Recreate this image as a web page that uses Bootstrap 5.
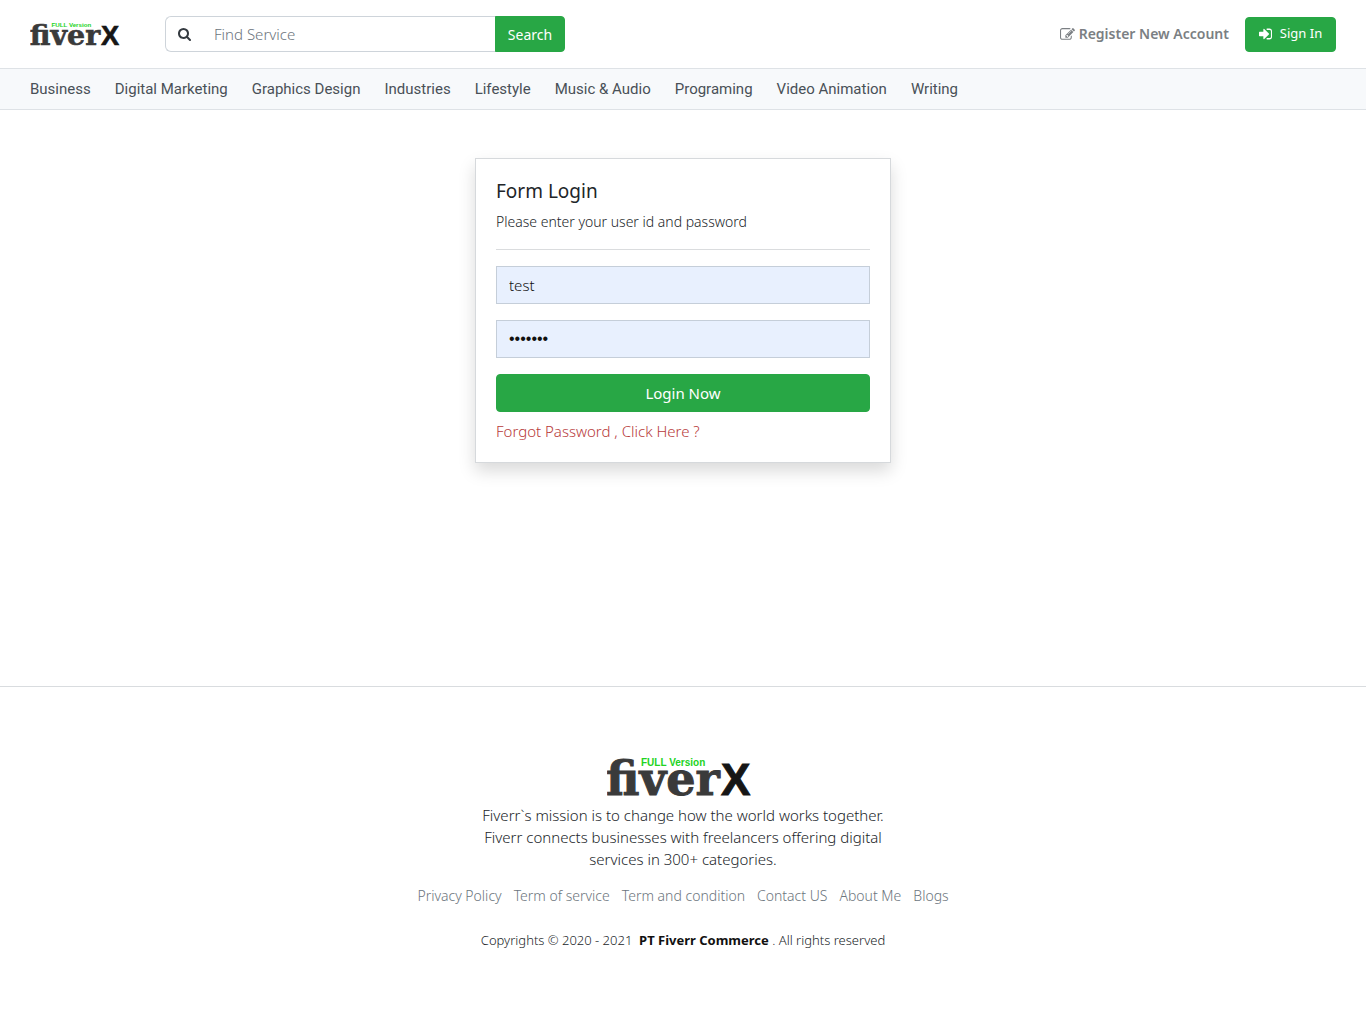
<!DOCTYPE html>
<html lang="en">
<head>
<meta charset="utf-8">
<meta name="viewport" content="width=device-width, initial-scale=1">
<title>fiverX - Form Login</title>
<link href="https://cdn.jsdelivr.net/npm/bootstrap@5.3.0/dist/css/bootstrap.min.css" rel="stylesheet">
<style>
body{font-family:"Noto Sans","Open Sans",sans-serif;font-size:14px;line-height:22px;font-weight:300;color:#212529;background:#fff}
a{text-decoration:none}
.site-top{padding:16px 30px;gap:45px;border-bottom:1px solid #dee2e6}
.brand-sm svg{width:90px;height:26px;display:block}
.find-box{width:400px;height:36px}
.find-box .input-group-text{background:#fff;border-color:#ced4da;border-right:0;padding:0 12px;color:#343a40;width:38px}
.find-box .form-control{border-color:#ced4da;border-left:0;font-size:15px;font-weight:300;padding:0 12px}
.find-box .form-control::placeholder{color:#6c757d}
.btn-green{--bs-btn-bg:#28a745;--bs-btn-border-color:#28a745;--bs-btn-color:#fff;--bs-btn-hover-bg:#218838;--bs-btn-hover-color:#fff;--bs-btn-border-radius:4px;font-weight:400}
.find-box .btn,.btn-signin{font-size:14px;padding:0 8px}
.find-box .btn{width:70px}
.btn-signin{width:91px;height:35px;font-size:13px}
.register-link{color:#7b7f83;font-weight:600;font-size:14px}
.cat-bar{height:41px;padding:0 30px;gap:24px;background:#f7f9fb;border-bottom:1px solid #dee2e6;font:400 15px/22px Roboto,sans-serif}
.cat-bar a{color:#495057}
.page-main{min-height:576px;padding-top:48px}
.login-card{max-width:416px;padding:20px;background:#fff;border:1px solid #d6d9dc;box-shadow:0 8px 16px rgba(0,0,0,.15)}
.login-card h1{font-size:19px;line-height:24px;font-weight:400;margin-bottom:8px}
.login-card hr{margin:0 0 16px;border-top:1px solid #dadcde;opacity:1}
.login-card .form-control{height:38px;border-radius:0;background:#e8f0fe;border-color:#c5ced9;font-size:15px;font-weight:300;margin-bottom:16px;color:#111}
.login-card .form-control[type=password]{font-family:"Liberation Sans",sans-serif;font-weight:400;font-size:16px}
.login-card .btn{height:38px;font-size:15px;padding:0}
.forgot{color:#b73a3a;font-size:15px}
.site-foot{border-top:1px solid #d9dcdf;padding:70px 16px 59px}
.brand-lg{padding-right:8px}
.brand-lg svg{width:144px;height:42px}
.mission{max-width:408px;font-size:15px;margin:5px auto 15px}
.foot-links{gap:12px;font-size:14px;margin-bottom:22px}
.foot-links a{color:#6c757d}
.copyright{font-size:13px}
.copyright b{font-weight:700;color:#111}
</style>
</head>
<body>
<svg class="d-none" aria-hidden="true">
  <symbol id="logo" viewBox="0 0 144 42">
    <text x="-1" y="38" font-family="DejaVu Serif,serif" font-weight="700" font-size="46" fill="#3a3a3a" stroke="#3a3a3a" stroke-width="1">fiver</text>
    <text x="114" y="38" font-family="Liberation Sans,sans-serif" font-weight="700" font-size="44" fill="#161616" stroke="#161616" stroke-width="1">X</text>
    <text x="34" y="9" font-family="Liberation Sans,sans-serif" font-weight="700" font-size="10" fill="#22d322">FULL Version</text>
  </symbol>
</svg>
<header>
  <div class="site-top d-flex align-items-center">
    <a class="brand-sm" href="#" aria-label="fiverX"><svg><use href="#logo"/></svg></a>
    <form class="find-box input-group flex-nowrap">
      <label class="input-group-text" for="find"><svg width="15" height="15" viewBox="0 0 1664 1664" fill="currentColor" aria-hidden="true"><path d="M1152 704q0-185-131.500-316.500T704 256 387.500 387.500 256 704t131.500 316.500T704 1152t316.500-131.500T1152 704zm512 832q0 52-38 90t-90 38q-54 0-90-38l-343-342q-179 124-399 124-143 0-273.500-55.500t-225-150-150-225T0 704t55.500-273.500 150-225 225-150T704 0t273.500 55.500 225 150 150 225T1408 704q0 220-124 399l343 343q37 37 37 90z"/></svg></label>
      <input id="find" class="form-control" type="text" placeholder="Find Service">
      <button class="btn btn-green" type="button">Search</button>
    </form>
    <div class="d-flex align-items-center ms-auto gap-3">
      <a class="register-link d-flex align-items-center gap-1 text-nowrap" href="#"><svg width="15" height="13" viewBox="0 0 1792 1536" fill="currentColor" aria-hidden="true"><path d="M888 1056l116-116-152-152-116 116v56h96v96h56zm440-720q-16-16-33 1L945 687q-17 17-1 33t33-1l350-350q17-17 1-33zm80 594v190q0 119-84.500 203.500T1120 1408H288q-119 0-203.500-84.500T0 1120V288Q0 169 84.500 84.500T288 0h832q63 0 117 25 15 7 18 23 3 17-9 29l-49 49q-14 14-32 8-23-6-45-6H288q-66 0-113 47t-47 113v832q0 66 47 113t113 47h832q66 0 113-47t47-113V994q0-13 9-22l64-64q15-15 35-7t20 29zm-96-738l288 288-672 672H640V864zm444 132l-92 92-288-288 92-92q28-28 68-28t68 28l152 152q28 28 28 68t-28 68z"/></svg>Register New Account</a>
      <button class="btn btn-green btn-signin d-flex align-items-center justify-content-center gap-2 text-nowrap" type="button"><svg width="13" height="12" viewBox="0 0 1536 1280" fill="currentColor" aria-hidden="true"><path d="M1184 640q0 26-19 45l-544 544q-19 19-45 19t-45-19-19-45V896H64q-26 0-45-19T0 832V448q0-26 19-45t45-19h448V96q0-26 19-45t45-19 45 19l544 544q19 19 19 45zm352-352v704q0 119-84.500 203.500T1248 1280H928q-13 0-22.500-9.500T896 1248v-96q0-13 9.500-22.500T928 1120h320q66 0 113-47t47-113V320q0-66-47-113t-113-47H928q-13 0-22.500-9.500T896 128V32q0-13 9.500-22.500T928 0h320q119 0 203.500 84.500T1536 288z"/></svg>Sign In</button>
    </div>
  </div>
  <nav class="cat-bar d-flex align-items-center text-nowrap" aria-label="Categories">
    <a href="#">Business</a><a href="#">Digital Marketing</a><a href="#">Graphics Design</a><a href="#">Industries</a><a href="#">Lifestyle</a><a href="#">Music &amp; Audio</a><a href="#">Programing</a><a href="#">Video Animation</a><a href="#">Writing</a>
  </nav>
</header>
<main class="page-main">
  <form class="login-card mx-auto">
    <h1>Form Login</h1>
    <p class="mb-3">Please enter your user id and password</p>
    <hr>
    <input class="form-control" type="text" value="test" aria-label="User id">
    <input class="form-control" type="password" value="testing" aria-label="Password">
    <button class="btn btn-green w-100 mb-2" type="button">Login Now</button>
    <a class="forgot d-block" href="#">Forgot Password , Click Here ?</a>
  </form>
</main>
<footer class="site-foot text-center">
  <div class="brand-lg d-flex justify-content-center"><svg role="img" aria-label="fiverX"><use href="#logo"/></svg></div>
  <p class="mission">Fiverr`s mission is to change how the world works together. Fiverr connects businesses with freelancers offering digital services in 300+ categories.</p>
  <nav class="foot-links d-flex flex-wrap justify-content-center" aria-label="Footer">
    <a href="#">Privacy Policy</a><a href="#">Term of service</a><a href="#">Term and condition</a><a href="#">Contact US</a><a href="#">About Me</a><a href="#">Blogs</a>
  </nav>
  <p class="copyright mb-0">Copyrights © 2020 - 2021 &nbsp;<b>PT Fiverr Commerce</b> . All rights reserved</p>
</footer>
<script src="https://cdn.jsdelivr.net/npm/bootstrap@5.3.0/dist/js/bootstrap.bundle.min.js"></script>
</body>
</html>
